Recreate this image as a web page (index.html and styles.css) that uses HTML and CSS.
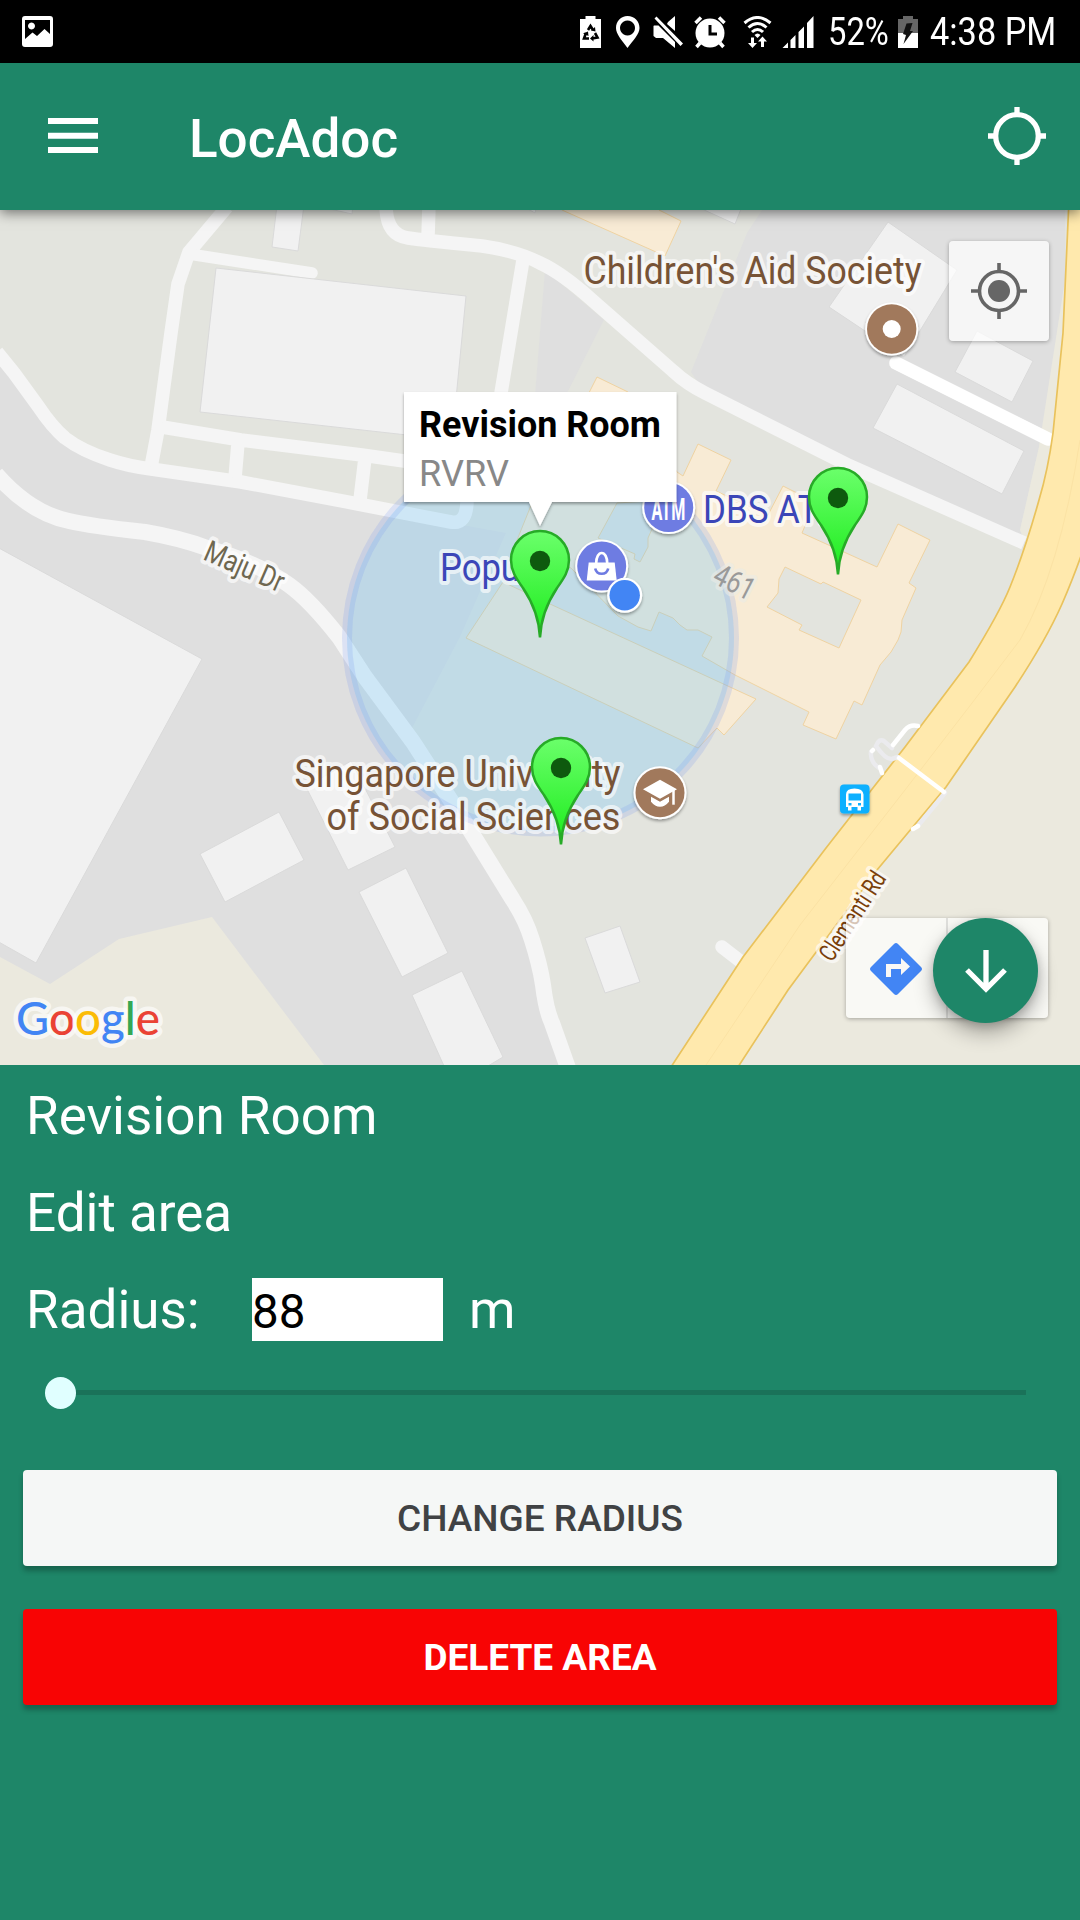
FILE: index.html
```html
<!DOCTYPE html>
<html lang="en">
<head>
<meta charset="utf-8">
<title>LocAdoc</title>
<link rel="stylesheet" href="styles.css">
</head>
<body>
<div class="screen">
  <div class="status">
    <svg class="status-picture" width="31" height="31" viewBox="0 0 31 31"><path fill="#fff" fill-rule="evenodd" d="M3 0H28Q31 0 31 3V28Q31 31 28 31H3Q0 31 0 28V3Q0 0 3 0ZM3 4V23L10.500 16.500L15 20L22.500 13L28 18V4ZM9.500 6.500a3.500 3.500 0 1 0 .01 0Z"/></svg>
    <div class="status-right">
      <svg width="235" height="33" viewBox="0 0 235 33" fill="#fff">
        <path d="M5.500 0H15.500V3H21V32H0V3H5.500Z"/>
        <g fill="none" stroke="#000" stroke-width="2.600"><path d="M8 14L10.500 10L13 14M15 17L17.500 21.500L12 22.500M9 22.500H4L6 17"/></g>
        <path fill="#000" d="M11 14.500L15.500 15.500L15 11ZM13.500 19V25.500L10 22.500ZM3 17.500L8 15.500L8.500 20Z"/>
        <path fill-rule="evenodd" d="M47.500 0C54.500 0 59.500 5 59.500 12C59.500 18 53.500 24 47.500 32C41.500 24 36 18 36 12C36 5 41 0 47.500 0ZM47.500 4.500a7.500 7.500 0 1 0 .01 0Z"/>
        <path d="M74 9.500H78.500L95 26V32L83 22H76L73.500 20V10ZM88 6L95 0V15L87 8ZM74.500 2.500L76.500 .5L103 27.500L100.500 30Z"/>
        <circle cx="130" cy="17" r="14.500"/><path stroke="#fff" stroke-width="3.500" d="M115.500 7L121 1.500M144.500 7L139 1.500M120 27L116.500 31M140 27L143.500 31"/><path fill="none" stroke="#000" stroke-width="3" d="M130 9V18H137"/>
        <g fill="none" stroke="#fff" stroke-width="3"><path d="M164.500 7Q177.500-4 190.500 7M168.500 11.500Q177.500 3.500 186.500 11.500M172 16Q177.500 11 183 16"/></g>
        <path d="M174.500 19Q177.500 16 180.500 19L177.500 22ZM171 21.500H174V27H177L172.500 32L168 27H171ZM181 31H184V25.500H187L182.500 20.500L178 25.500H181Z"/>
        <path d="M202.500 32L208 26.500V32ZM210.500 24L215.500 19V32H210.500ZM218.500 16L224 10.500V32H218.500ZM227 7L233.500 0V32H227Z"/>
      </svg>
      <span class="percent"><span>52%</span></span>
      <svg width="21" height="33" viewBox="0 0 21 33"><path fill="#666" d="M5 0H15V3H20V17H0V3H5Z"/><path fill="#fff" d="M0 17H20V32H0Z"/><path fill="#111" d="M8.500 7.500L14.500 7L12 15H15L5.500 28L8 19L5 18Z"/></svg>
      <span class="clock"><span>4:38 PM</span></span>
    </div>
  </div>

  <header class="appbar">
    <svg class="menu" width="50" height="36" viewBox="0 0 50 36"><path fill="#fff" d="M0 0H50V6H0ZM0 14.700H50V20.700H0ZM0 29H50V35H0Z"/></svg>
    <h1>LocAdoc</h1>
    <svg class="target" width="60" height="60" viewBox="-30 -30 60 60"><g fill="none" stroke="#fff" stroke-width="5.300"><circle r="21.300"/><path d="M0-29V-21M0 21V29M-29 0H-21M21 0H29"/></g></svg>
  </header>

  <main class="map">
    <svg class="map-canvas" width="1080" height="855" viewBox="0 210 1080 855">
      <defs>
        <linearGradient id="pinFill" x1="0" y1="0" x2="0" y2="1"><stop offset="0" stop-color="#6bff6b"/><stop offset="1" stop-color="#1cec1c"/></linearGradient>
        <filter id="drop" x="-30%" y="-30%" width="160%" height="160%"><feDropShadow dx="0" dy="2" stdDeviation="1.500" flood-opacity=".35"/></filter>
        <g id="pin"><path d="M0-.5C-1-22-9-38-17-50C-24-60-29-67-29-78A29 29 0 0 1 29-78C29-67 24-60 17-50C9-38 1-22 0-.5Z" fill="url(#pinFill)" stroke="#27ab27" stroke-width="2.500"/><circle cy="-77" r="10.200" fill="#0e5a0e"/></g>
      </defs>
      <rect y="210" width="1080" height="855" fill="#e3e4de"/>
      <g fill="#dfdfdf">
        <path d="M0 356L34 397L58 430L110 460L151 469L358 504L451 523L506 533L460 637L411 730L468 827L513 900L532 940L543 980L552 1023L567 1065H0Z"/>
        <path d="M762 210L747 233L691 372L705 393L850 467L1026 543L1020 530L1039 447L1065 300V210Z"/>
        <path d="M545 270L604 320L566 395H535Z"/>
      </g>
      <g fill="#ebe9de">
        <path d="M0 957L50 984L119 939L212 917L324 1065H0Z"/>
        <path d="M1070 280H1065L1039 447L1020 530L1028 550L1080 400Z"/>
        <path d="M1080 540L1046 630L946 780L877 860L739 1065H1080Z"/>
      </g>
      <g fill="#f1f1f1" stroke="#dadada">
        <path d="M-3 547L202 659L36 963L-3 941Z"/>
        <path d="M200 854L279 812L304 860L225 902Z"/><path d="M306 787L351 761L395 847L348 870Z"/>
        <path d="M359 892L406 868L448 953L402 977Z"/><path d="M412 995L462 971L503 1057L488 1066H444Z"/>
        <path d="M585 938L620 926L640 982L605 993Z"/>
        <path d="M277 205H304L298 251L272 247Z"/><path d="M330 209L352 214L353 205ZM528 209L535 213L537 205Z"/>
        <path d="M888 222L957 270L904 357L829 307Z"/><path d="M977 331L1033 361L1012 402L955 372Z"/>
        <path d="M897 384L1024 451L1002 494L873 428Z"/><path d="M702 209H741L735 224Z"/>
      </g>
      <g fill="none" stroke="#f5f5f5" stroke-width="13.500" stroke-linejoin="round">
        <path d="M-3 352L14 373L38 406Q52 427 65 438Q82 451 110 460Q128 466 151 469L241 482L358 504L451 522Q467 525 467 500"/>
        <path d="M227 207L189 252L178 284L171 333L158 430L151 467"/>
        <path d="M189 254L312 273" stroke-linecap="round" stroke-width="11.500"/>
        <path d="M162 427L241 440L362 455L460 469M238 443L235 478M365 458L360 500"/>
        <path d="M386 205Q386 235 408 238Q420 240 482 246Q517 251 540 263Q562 273 592 300L673 371Q687 384 705 393L850 466L1024 543"/>
        <path d="M429 205L428 237M523 260L501 393"/>
        <path stroke-width="16" d="M-4 474Q30 513 69 521Q90 526 145 532Q180 538 207 548Q260 564 289 585Q310 600 339 637L365 677L413 742L468 827L513 900Q526 920 532 940Q540 965 543 985Q546 1010 552 1023L568 1068"/>
        <path d="M722 947L744 964" stroke-linecap="round"/>
      </g>
      <path d="M216 268L466 296L452 440L200 412Z" fill="#f1f1f1" stroke="#dadada"/>
      <path d="M896 363L1048 439" stroke="#fff" stroke-width="13.500" stroke-linecap="round"/>
      <g fill="#f8ebd5" stroke="#efd3a2">
        <path d="M562 210L559 205H659V210L681 221L665 256Z"/>
        <path d="M597 377L628 392L677 472L683 476L698 444L731 460L716 491L768 515L783 486L815 502L802 533L877 567L898 524L930 540L909 583L916 588L902 620L901 632L898 640L891 652L880 665L862 705L854 701L836 739L803 725L809 712L735 675L702 656L712 637L698 630H687L680 625L673 618L659 612L651 631L638 627L618 616L571 568L515 545L532 503L560 450Z"/>
        <path d="M503 582L466 638L698 748L717 728L724 735L756 699L550 604Z"/>
      </g>
      <g fill="#e3e4de" stroke="#efd3a2">
        <path d="M785 567L821 584L823 582L861 600L839 648L799 630L802 625L767 607L778 593L779 579Z"/>
        <path d="M617 503L598 538L635 554L634 559L640 562L648 547V538L665 500Z"/>
      </g>
      <path fill="#ffe9ad" d="M1069 200L1063 333L1053 433Q1048 470 1039 500Q1025 550 1010 587Q1000 612 969 662L905 747L826 848L743 957L671 1067H738L788 990L877 870L946 787L1015 687Q1046 640 1062 604Q1074 576 1081 555V200Z"/>
      <g fill="none" stroke="#e9c25c" stroke-width="1.700">
        <path d="M1069 200L1063 333L1053 433Q1048 470 1039 500Q1025 550 1010 587Q1000 612 969 662L905 747L826 848L743 957L671 1067"/>
        <path d="M1082 553Q1074 576 1062 604Q1046 640 1015 687L946 787L877 870L788 990L738 1067"/>
        <path stroke="#fbe2a4" stroke-width="1" d="M1080 440Q1060 570 1020 640L969 707L905 790L800 925L706 1065"/>
      </g>
      <g fill="none" stroke-linecap="round">
        <path stroke="#ebebee" stroke-width="4.500" d="M892 748L884 741Q879 738 876 746Q886 760 892 759L898 757M871 752Q870 762 879 768M945 793L917 827"/>
        <path stroke="#fff" stroke-width="4.500" d="M918 726Q910 724 905 730L893 745M872 751L873 750M880 767L882 773M899 758L944 792M918 826L913 829"/>
      </g>

      <circle cx="540.500" cy="638" r="193.500" fill="rgba(104,196,252,.27)" stroke="rgba(120,150,240,.2)" stroke-width="10"/>

      <g class="label">
        <text class="place" x="583.500" y="283.500" textLength="338" lengthAdjust="spacingAndGlyphs">Children's Aid Society</text>
        <text class="place" x="294.500" y="786.500" textLength="326" lengthAdjust="spacingAndGlyphs">Singapore University</text>
        <text class="place" x="326.500" y="829.500" textLength="294" lengthAdjust="spacingAndGlyphs">of Social Sciences</text>
        <text class="shop" x="440" y="581" textLength="119" lengthAdjust="spacingAndGlyphs">Popular</text>
        <text class="shop" x="703" y="523" textLength="146" lengthAdjust="spacingAndGlyphs">DBS ATM</text>
        <text class="road" transform="translate(202 559) rotate(23.500)" textLength="84" lengthAdjust="spacingAndGlyphs">Maju Dr</text>
        <text class="number" transform="translate(711 582) rotate(27)" textLength="42" lengthAdjust="spacingAndGlyphs">461</text>
        <text class="highway" transform="translate(832 963) rotate(-57)" textLength="101" lengthAdjust="spacingAndGlyphs">Clementi Rd</text>
      </g>

      <g filter="url(#drop)"><circle cx="668.700" cy="507.500" r="26.500" fill="#fff"/><circle cx="668.700" cy="507.500" r="24.500" fill="#6e7be2"/></g>
      <text class="atm" x="651.500" y="520" textLength="34" lengthAdjust="spacingAndGlyphs">ATM</text>
      <g transform="translate(601.700 566)"><g filter="url(#drop)"><circle r="26.500" fill="#fff"/><circle r="24.500" fill="#6e7be2"/></g>
        <path fill="#fff" d="M-13-3.500H13L15 14.500H-15Z"/><path fill="none" stroke="#fff" stroke-width="2.600" d="M-5.500-3C-5.500-9-3-13 0-13S5.500-9 5.500-3"/><path fill="none" stroke="#6e7be2" stroke-width="2.600" d="M-6.500 2.500C-5 9.500 5 9.500 6.500 2.500"/></g>
      <g transform="translate(660 792.700)"><g filter="url(#drop)"><circle r="26.500" fill="#fff"/><circle r="24.500" fill="#a1795c"/></g>
        <path fill="#fff" d="M0-13L17-3.500L0 6L-17-3.500ZM-9 4L0 9L9 4V9Q5 14 0 14T-9 9Z"/><path stroke="#fff" stroke-width="2.500" d="M13.500-3V12"/></g>
      <g transform="translate(891.700 329)"><g filter="url(#drop)"><circle r="26.500" fill="#fff"/><circle r="24.700" fill="#a1795c"/></g><circle r="9" fill="#fff"/></g>
      <g transform="translate(840 784.500)"><g filter="url(#drop)"><rect width="29.500" height="29" rx="4" fill="#0ab0ff"/></g>
        <path fill="#fff" fill-rule="evenodd" d="M6 10Q6 4 14.500 4T23.500 10V22.500H21V26H17.500V22.500H11.500V26H8V22.500H6ZM8.500 9V16H21V9ZM8.500 18.500V21H11.500V18.500ZM18 18.500V21H21V18.500Z"/></g>
      <g filter="url(#drop)"><circle cx="624.700" cy="595.300" r="17.500" fill="#fff"/><circle cx="624.700" cy="595.300" r="15.200" fill="#4285f4"/></g>

      <use href="#pin" x="838" y="575"/>
      <use href="#pin" x="561" y="845"/>
      <use href="#pin" x="540" y="638"/>

      <text class="google" x="16" y="1034.500" textLength="144" lengthAdjust="spacingAndGlyphs"><tspan fill="#4285f4">G</tspan><tspan fill="#ea4335">o</tspan><tspan fill="#fbbc05">o</tspan><tspan fill="#4285f4">g</tspan><tspan fill="#34a853">l</tspan><tspan fill="#ea4335">e</tspan></text>

      <g filter="url(#drop)"><path fill="#fff" d="M404 392H676.500V502H552L540 526L529 502H404Z"/></g>
      <text class="info-title" x="419" y="437" textLength="242" lengthAdjust="spacingAndGlyphs">Revision Room</text>
      <text class="info-sub" x="419" y="486" textLength="90" lengthAdjust="spacingAndGlyphs">RVRV</text>
    </svg>

    <div class="map-button locate"><svg width="60" height="60" viewBox="-30 -30 60 60"><circle r="11" fill="#666"/><g fill="none" stroke="#666" stroke-width="3.600"><circle r="19.500"/><path d="M0-28V-20M0 20V28M-28 0H-20M20 0H28"/></g></svg></div>
    <div class="map-button directions">
      <div class="route"><svg width="54" height="54" viewBox="-27 -28 54 54"><path fill="#4285f4" d="M-2-25Q0-27 2-25L25-2Q27 0 25 2L2 25Q0 27-2 25L-25 2Q-27 0-25-2Z"/><path fill="#f9f8f5" d="M-10 8V-5H5V-11L14-2.500L5 6V0H-5V8Z"/></svg></div>
      <div class="open"></div>
    </div>
    <div class="fab"><svg width="44" height="44" viewBox="-22 -22 44 44"><path fill="none" stroke="#fff" stroke-width="5.300" d="M0-21V18M-19-1L0 18L19-1"/></svg></div>
  </main>

  <section class="panel">
    <p class="line">Revision Room</p>
    <p class="line">Edit area</p>
    <div class="line radius"><span class="caption">Radius:</span><span class="field">88</span><span>m</span></div>
    <div class="slider"><div class="thumb"></div><div class="track"></div></div>
    <div class="actions">
      <div class="button change">CHANGE RADIUS</div>
      <div class="button delete">DELETE AREA</div>
    </div>
  </section>
</div>
</body>
</html>
```
FILE: styles.css
```css
* { box-sizing: border-box; }
body { margin: 0; font-family: Roboto, "Liberation Sans", sans-serif; background: #1e8668; }
svg { display: block; flex: none; }
.screen { width: 1080px; height: 1920px; display: flex; flex-direction: column; overflow: hidden; }

.status { height: 63px; flex: none; background: #000; color: #fff; display: flex; justify-content: space-between; padding: 16px 24px 0 22px; }
.status-right { display: flex; font-size: 39px; line-height: 33px; }
.percent, .clock { display: block; white-space: nowrap; }
.percent span, .clock span { display: inline-block; transform-origin: 0 0; }
.percent { width: 69px; margin-left: 13px; margin-right: 1px; }
.percent span { transform: scaleX(.84); }
.clock { width: 126px; margin-left: 11px; }
.clock span { transform: scaleX(.88); }

.appbar { height: 147px; flex: none; background: #1e8668; color: #fff; display: flex; align-items: flex-start; padding: 0 33px 0 48px; box-shadow: 0 3px 12px rgba(0,0,0,.5); z-index: 2; }
.menu { margin-top: 55px; }
.target { margin: 42.600px 0 0 auto; }
h1 { margin: 44px 0 0 91px; font-size: 53px; line-height: 65px; font-weight: 500; }

.map { position: relative; height: 855px; flex: none; }
.label text { paint-order: stroke; stroke: rgba(255,255,255,.65); stroke-width: 8px; stroke-linejoin: round; }
.place { font-size: 38.500px; fill: #775336; }
.shop { font-size: 38.500px; fill: #3b46b8; }
.road { font-size: 30px; fill: #6e6750; }
.number { font-size: 31px; fill: #999; }
.label .number { stroke: rgba(235,235,230,.6); }
.highway { font-size: 25px; fill: #7a3f0a; }
.atm { font-size: 32px; font-weight: 700; fill: #fff; }
.google { font-family: Lato, sans-serif; font-size: 46.500px; font-weight: 500; paint-order: stroke; stroke: rgba(255,255,255,.65); stroke-width: 9px; stroke-linejoin: round; }
.info-title { font-size: 36.500px; font-weight: 700; fill: #000; }
.info-sub { font-size: 37px; fill: #888; }
.map-button { position: absolute; display: flex; background: rgba(255,255,255,.7); border-radius: 4px; box-shadow: 0 1px 4px rgba(0,0,0,.3); }
.locate { left: 949px; top: 31px; width: 100px; height: 100px; align-items: center; justify-content: center; }
.directions { left: 846px; top: 708px; width: 202px; height: 100px; }
.route { width: 102px; border-right: 2px solid rgba(0,0,0,.1); display: flex; align-items: center; justify-content: center; }
.fab { position: absolute; left: 933px; top: 708px; width: 105px; height: 105px; border-radius: 50%; background: #1e8668; display: flex; align-items: center; justify-content: center; box-shadow: 0 10px 20px rgba(0,0,0,.3), 0 3px 8px rgba(0,0,0,.15); }

.panel { flex: 1; background: #1e8668; padding: 16px 23px 0; display: flex; flex-direction: column; }
.line { margin: 0 0 17px 3px; height: 80px; color: #fff; font-size: 53px; line-height: 71px; }
.radius { display: flex; margin-bottom: 0; }
.caption { width: 226px; }
.field { width: 191px; height: 63px; margin: 3px 26px 0 0; background: #fff; color: #000; font-size: 47.500px; line-height: 68px; }
.slider { height: 32px; margin: 21.500px 31px 0 22px; display: flex; align-items: center; }
.thumb { width: 31px; height: 32px; border-radius: 50%; background: #e0ffff; flex: none; }
.track { flex: 1; height: 5px; background: #1a7259; }
.actions { display: flex; flex-direction: column; gap: 43px; margin-top: 61.500px; }
.button { height: 96px; border-radius: 4px; text-align: center; font-size: 37px; line-height: 98px; box-shadow: 0 5px 5px rgba(0,0,0,.25); }
.change { background: #f5f7f6; color: #404244; font-weight: 500; }
.delete { background: #f80404; color: #fff; font-weight: 700; }
```
